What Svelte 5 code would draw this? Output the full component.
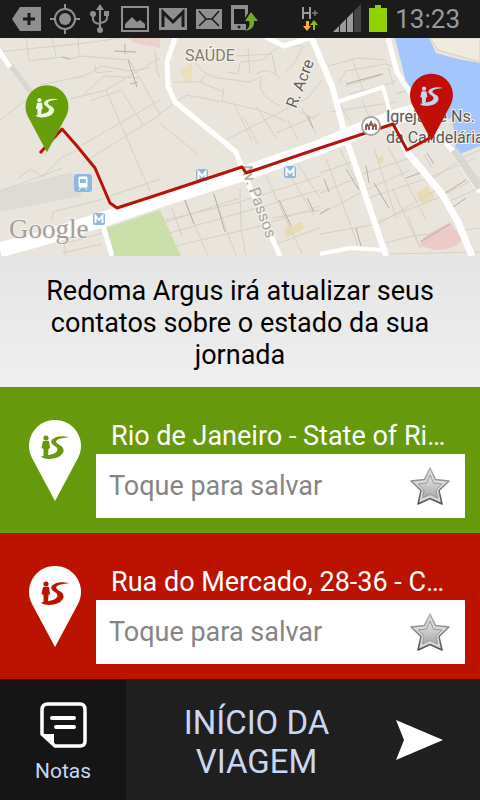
<script lang="ts">
  type Place = { id: string; tone: string; address: string };

  const places: Place[] = [
    { id: 'origin', tone: 'green', address: 'Rio de Janeiro - State of Ri…' },
    { id: 'destination', tone: 'red', address: 'Rua do Mercado, 28-36 - C…' },
  ];

  let names: Record<string, string> = $state({ origin: '', destination: '' });

  const blocks = [
    'M0 14 L26 11 L78 6 L150 -4', 'M26 0 L29 23 L62 19 L70 21 L82 18 L128 22', 'M52 0 L56 18', 'M78 0 L79 17',
    'M40 47 L84 38 L102 28 L130 33 L150 30', 'M95 27 L96 35 L112 33', 'M84 56 L104 38 L140 40', 'M70 61 L106 52 L160 20',
    'M106 52 L126 98 L150 153', 'M90 63 L121 52 L144 88', 'M80 108 L160 62', 'M84 124 L126 98 L160 77', 'M0 82 L26 62',
    'M155 12 L157 33 L160 40', 'M128 20 L160 76', 'M0 153 L42 138 L62 130', 'M42 138 L62 119 L78 112', 'M18 141 L30 131 L42 138',
    'M52 182 L53 174 L110 159', 'M110 158 L160 141', 'M62 215 L102 206', 'M64 206 L102 195', 'M62 190 L66 218',
    'M160 75 L187 57 L234 66 L252 103', 'M173 44 L200 44 L224 54', 'M200 44 L206 36', 'M224 50 L222 63',
    'M195 24 Q204 38 218 40 L250 44 L262 38', 'M226 34 L238 36 L240 24 L262 22 L280 8 L303 8', 'M236 18 L272 16 L276 36',
    'M248 8 L250 36', 'M256 36 Q268 28 280 40', 'M262 40 Q256 52 270 62 L280 68', 'M285 35 Q296 26 303 8',
    'M234 66 L262 73 L285 83', 'M226 102 L308 60 L322 42', 'M243 78 L258 106', 'M256 68 L276 100', 'M276 95 L320 76',
    'M160 85 Q190 110 198 116', 'M288 82 L298 102', 'M302 70 L316 96', 'M301 74 L314 81',
    'M160 186 L240 160', 'M166 182 L240 164 L320 138', 'M170 195 L250 172 L320 152', 'M176 208 L260 188 L320 168',
    'M184 162 L208 218', 'M212 152 L236 218', 'M240 150 L241 190 L246 218', 'M266 138 L302 216', 'M286 130 L314 178', 'M298 126 L320 160',
    'M272 180 L320 172', 'M276 206 L320 190', 'M172 170 L182 198', 'M222 152 L216 148',
    'M324 100 L348 92', 'M320 135 L352 124', 'M320 155 L362 138', 'M320 176 L366 152 L410 132', 'M320 196 L378 186 L440 150',
    'M326 121 L358 207', 'M340 112 L362 154', 'M348 96 L352 118', 'M374 110 L396 180', 'M388 108 L426 182', 'M362 136 L416 118',
    'M368 160 L428 140 L476 120', 'M372 186 L438 160 L480 138', 'M382 206 L412 198 L480 190', 'M392 150 L420 210', 'M434 140 L466 118 L480 112',
    'M420 210 L408 178', 'M442 166 L480 150', 'M384 216 L480 214', 'M424 116 L432 130', 'M434 104 L462 94',
    'M328 28 L358 20 L386 22', 'M346 33 L385 26 L392 28', 'M352 20 L364 55', 'M338 45 L346 33', 'M346 48 L384 36',
    'M350 56 L388 46 L396 42', 'M330 74 L396 64', 'M362 62 L374 90', 'M396 56 L414 50', 'M340 66 L350 84', 'M388 30 L394 48',
  ];

  const lanes = [
    'M114 13 L136 14', 'M125 6 L125 16', 'M128 22 L137 49', 'M130 46 L138 44', 'M62 19 L70 21',
    'M185 162 L194 186', 'M214 156 L225 194', 'M279 162 L291 188', 'M307 160 L314 174', 'M366 128 L369 145', 'M374 145 L389 170',
    'M346 131 L359 152', 'M324 141 L329 154', 'M406 140 L420 135', 'M442 157 L466 142', 'M452 170 L466 160', 'M420 204 L450 186',
    'M346 46 L382 36', 'M308 78 L313 90', 'M427 115 L434 126', 'M320 176 L329 170', 'M356 190 L361 208',
  ];
</script>

{#snippet walker()}
  <circle cx="17" cy="19" r="2.6" />
  <path d="M14 22 H20 L21 29 L19.5 30 L19 37 H14.5 L14.5 30 L12.5 29 Z" />
  <path d="M40 18.2 C33 16.2 25 17.5 22.5 21.5 C20.5 26 29.500 27 28.500 31 C27.500 35.500 18 36 12 37.500 C15 41.500 32 41 34.500 32.500 C36 26.500 27 25.500 27 22.500 C28 19.500 34 19 40 18.200 Z" />
{/snippet}

{#snippet pinShape()}
  <path d="M26 82 L3 39 A26 26 0 1 1 49 39 Z" />
{/snippet}

<div class="screen">
  <header class="status">
    <div class="notices">
      <svg width="30" height="30" viewBox="0 0 30 30" class="g"><path d="M0 15 L8 3 H29 V27 H8 Z" /><path d="M17 9 V21 M11 15 H23" stroke="#1b1b1b" stroke-width="3" /></svg>
      <svg width="30" height="30" viewBox="0 0 30 30" class="g"><circle cx="15" cy="15" r="6" /><circle cx="15" cy="15" r="10" fill="none" stroke="#8f8f8f" stroke-width="2" /><path d="M15 0 V6 M15 24 V30 M0 15 H6 M24 15 H30" stroke="#8f8f8f" stroke-width="2" /></svg>
      <svg width="24" height="30" viewBox="-2 0 24 30" class="g"><path d="M10 5 V26 M3 11 V15 Q3 19 10 20 M17 10 V14 Q17 18 10 19" fill="none" stroke="#8f8f8f" stroke-width="2" /><path d="M10 0 L14 6 H6 Z" /><circle cx="3" cy="10" r="3" /><rect x="14" y="7" width="5" height="5" /><circle cx="10" cy="26" r="3" /></svg>
      <svg width="30" height="30" viewBox="0 0 30 30" class="g"><rect x="2" y="3" width="26" height="24" fill="none" stroke="#8f8f8f" stroke-width="2" /><path d="M5 24 V20 L12 13 L17 18 L20 16 L25 20 V24 Z" /></svg>
      <svg width="30" height="30" viewBox="0 0 30 30" class="g"><rect x="1" y="4" width="28" height="22" /><path d="M5 23 V8 L15 18 L25 8 V23" fill="none" stroke="#1b1b1b" stroke-width="3" /></svg>
      <svg width="26" height="30" viewBox="0 0 26 30" class="g"><rect y="5" width="26" height="20" /><path d="M3 7 L10 15 L16 15 L23 7 M3 22 L10 15 M23 22 L16 15" fill="none" stroke="#1b1b1b" stroke-width="1.500" /></svg>
      <svg width="28" height="30" viewBox="0 0 28 30" class="g"><path d="M1 1 H18 V9 L15 14 V5 H4 V20 H16 V26 H1 Z" /><circle cx="9" cy="23" r="1.500" fill="#1b1b1b" /><path d="M15 27 Q21 23 19 17 H15 L21 8 L28 17 H24 Q25 26 15 27 Z" fill="#76a82a" /></svg>
    </div>
    <div class="signals">
      <svg width="24" height="30" viewBox="0 0 24 30"><path d="M2 3 V15 M9 3 V15 M2 9 H9" stroke="#9c9c9c" stroke-width="2" /><path d="M11 9 H17 M14 6 V12" stroke="#9c9c9c" stroke-width="1" /><path d="M5 17 H8 V22 H10 L6 27 L2 22 H5 Z" fill="#ffae35" /><path d="M12 26 H14 V21 H17 L13 16 L9 21 H12 Z" fill="#7dc80f" /></svg>
      <svg width="28" height="30" viewBox="0 0 28 30"><path d="M0 28 L6 22 V28 Z M7 28 V21 L13 15 V28 Z M14 28 V14 L20 8 V28 Z" fill="#9a9a9a" /><path d="M21 28 V7 L28 0 V28 Z" fill="#444" /></svg>
      <svg width="18" height="30" viewBox="0 0 18 30"><path d="M0 4 H6 V1 H12 V4 H18 V28 H0 Z" fill="#91d000" /></svg>
      <time>13:23</time>
    </div>
  </header>

  <svg class="map" viewBox="0 0 480 218" preserveAspectRatio="xMidYMid slice" role="img" aria-label="Mapa do trajeto">
    <rect width="480" height="218" fill="#e9e5dc" />
    <path d="M128 0 H160 V10 L134 5 Z" fill="#edd0c9" />
    <path d="M0 152 L72 134 L82 158 L0 174 Z" fill="#dedbd5" />
    <path d="M180 33 L192 25 V44 H187 Z" fill="#eddfb8" />
    <path d="M107 190 L160 172 L181 218 H111 Z" fill="#cadfaa" />
    <path d="M284 190 L302 184 L304 191 L286 200 Z M416 156 L427 148 L435 159 L423 168 Z M377 120 L383 118 L384 124 L378 126 Z" fill="#e9dcb4" />
    <path d="M420 208 Q422 198 432 194 L450 184 L462 202 Q455 212 436 212 Z" fill="#eccac6" />
    <path d="M395 0 H429 L436 15 L458 21 L480 25 V108 L470 112 L460 116 L445 95 L420 60 L406 44 Z" fill="#a5c6fd" />
    <path d="M430 0 L438 12 L480 24 V0 Z" fill="#efebdf" stroke="#d4cec1" />
    <path d="M420 88 L452 80 L456 108 L440 108 Z" fill="#e4e1dc" />
    <g class="blocks">
      {#each blocks as d}<path {d} />{/each}
    </g>
    <g class="lanes">
      {#each lanes as d}<path {d} />{/each}
    </g>

    <path d="M-4 8 L33 57" stroke="#d9d7d1" stroke-width="5" />
    <g class="roads">
      <path d="M-2 11 L10 29" stroke-width="5" />
      <path d="M0 212 L50 198 L107 180 L160 162 L245 135 L320 109 L370 88 L398 78 L436 68" stroke-width="15" />
      <path d="M175 0 L167 24 L168 48 L175 64 L224 104 L236 114 L244 136 L280 218" stroke-width="5" />
      <path d="M258 -5 L284 8 L312 -1" stroke-width="5" />
      <path d="M310 -4 L332 48 L346 100 L386 218" stroke-width="6" />
      <path d="M337 64 L383 49 L392 82" stroke-width="4" />
      <path d="M388 0 L397 34 L416 64 L456 118 L480 154" stroke-width="5" />
      <path d="M393 86 L408 115 L442 156 L458 184 L472 218" stroke-width="7" />
      <path d="M102 184 L112 218" stroke-width="5" />
      <path d="M320 216 L350 210 L384 212" stroke-width="4" />
    </g>
    <path d="M454 112 L480 150" stroke="#d9d7d1" stroke-width="8" />

    <g class="labels">
      <text x="185" y="23" fill="#82796a">SAÚDE</text>
      <text transform="translate(296 71) rotate(-69)" fill="#66625c">R. Acre</text>
      <text transform="translate(240 128) rotate(70)" fill="#aaa69f">Av. Passos</text>
      <text x="386" y="84" fill="#5a5a5a">Igreja de Ns.</text>
      <text x="386" y="105" fill="#5a5a5a">da Candelária</text>
      <text class="google" x="9" y="200">Google</text>
    </g>

    <g fill="#8db8e2">
      <rect x="74" y="136" width="18" height="18" rx="3" />
      <rect x="93" y="175" width="12" height="12" rx="2" />
      <rect x="196" y="131" width="12" height="12" rx="2" />
      <rect x="284" y="128" width="12" height="12" rx="2" />
    </g>
    <path d="M95.500 185 V178 L99 182 L102.500 178 V185 M198.500 141 V134 L202 138 L205.500 134 V141 M286.500 138 V131 L290 135 L293.500 131 V138" fill="none" stroke="#fff" stroke-width="2" />
    <path d="M79 139 H87 V149 H79 Z M79 152 L81 149 M87 152 L85 149" fill="#fff" stroke="#fff" />
    <path d="M80 141 H86 V145 H80 Z" fill="#8db8e2" />

    <path class="route" d="M40 115 L62 91 L77 108 L95 130 L110 165 L117 170 L160 156 L242 129 L246 135 L320 110 L393 86 L407 112 L430 100" />

    <circle cx="371" cy="88" r="9" fill="#fff" stroke="#a9a5a0" stroke-width="2" />
    <path d="M365 92 V87 L367 85 L369 87 V86 L371 82 L373 86 V87 L375 85 L377 87 V92 H375 V89 H374 V92 H372 V88 H370 V92 H368 V89 H367 V92 Z" fill="#8e6357" />

    <g transform="translate(25.500 46.500) scale(.825)"><g fill="#689d0b">{@render pinShape()}</g><g fill="#eef7df">{@render walker()}</g></g>
    <g transform="translate(410 35) scale(.825)"><g fill="#c01005">{@render pinShape()}</g><g fill="#c3d3f0">{@render walker()}</g></g>
  </svg>

  <p class="message">Redoma Argus irá atualizar seus contatos sobre o estado da sua jornada</p>

  {#each places as place (place.id)}
    <section class="place {place.tone}">
      <svg class="pin" width="52" height="82" viewBox="0 0 52 82" aria-hidden="true">
        <g fill="#fff">{@render pinShape()}</g>
        <g fill="currentColor">{@render walker()}</g>
      </svg>
      <div class="details">
        <label for={place.id}>{place.address}</label>
        <div class="field">
          <input id={place.id} type="text" placeholder="Toque para salvar" bind:value={names[place.id]} />
          <button class="star" aria-label="Favorito">
            <svg width="40" height="40" viewBox="0 0 40 40">
              <defs>
                <linearGradient id="metal-{place.id}" x2="0" y2="1"><stop stop-color="#e6e6e6" /><stop offset="1" stop-color="#a8a8a8" /></linearGradient>
                <linearGradient id="edge-{place.id}" x2="0" y2="1"><stop stop-color="#b5b5b5" /><stop offset="1" stop-color="#505050" /></linearGradient>
              </defs>
              <path d="M20 2 L25.500 13.500 L39 15 L29 24.500 L32 38 L20 32.500 L8 38 L11 24.500 L1 15 L14.500 13.500 Z" fill="#d9d9d9" stroke="url(#edge-{place.id})" stroke-width="1.500" stroke-linejoin="round" />
              <path d="M20 9 L23.500 17 L32 18 L26 24 L27.500 32 L20 28.500 L12.500 32 L14 24 L8 18 L16.500 17 Z" fill="url(#metal-{place.id})" stroke="#999" />
            </svg>
          </button>
        </div>
      </div>
    </section>
  {/each}

  <footer>
    <button class="notes">
      <svg width="48" height="48" viewBox="0 0 48 48" aria-hidden="true">
        <path d="M9 3 H41 Q46 3 46 9 V40 Q46 45 41 45 H16 L3 33 V9 Q3 3 9 3 Z" fill="none" stroke="#fff" stroke-width="3.500" />
        <path d="M3 33 H15 V45 Z" fill="#fff" />
        <path d="M13 17 H35 M17 26 H35" stroke="#fff" stroke-width="4" stroke-linecap="round" />
      </svg>
      <span>Notas</span>
    </button>
    <button class="start">
      <span>INÍCIO DA VIAGEM</span>
      <svg width="48" height="40" viewBox="0 0 48 40" aria-hidden="true"><path d="M1 0 L48 20 L1 40 L9 20 Z" fill="#fff" /></svg>
    </button>
  </footer>
</div>

<style>
  :global(body) { margin: 0; background: #1f1f1f; }
  .screen {
    min-height: 100vh;
    display: flex; flex-direction: column;
    font-family: Roboto, "Noto Sans", sans-serif;
  }
  svg { display: block; flex: none; }
  button { border: 0; padding: 0; background: none; font: inherit; color: inherit; cursor: pointer; }

  .status {
    height: 38px; padding: 0 20px 0 12px;
    display: flex; align-items: center; justify-content: space-between;
    background: #1b1b1b; color: #9a9a9a;
  }
  .notices { display: flex; align-items: center; gap: 8px; }
  .signals { display: flex; align-items: center; gap: 8px; }
  .g { fill: #8f8f8f; }
  time { font-size: 26px; line-height: 36px; }

  .map { width: 100%; height: auto; }
  .blocks { fill: none; stroke: #d6d1c7; stroke-width: 1; }
  .lanes { fill: none; stroke: #b3afa6; stroke-width: 1; }
  .roads { fill: none; stroke: #fff; stroke-linejoin: round; }
  .labels { font-size: 16px; stroke: #f5f2ec; stroke-width: 2; paint-order: stroke; }
  .google { font-family: "Liberation Serif", serif; font-size: 27px; fill: #a3a09b; }
  .route { fill: none; stroke: #b51409; stroke-width: 3; stroke-linejoin: round; }

  .message {
    margin: 0; padding: 19px 32px 16px;
    background: linear-gradient(#e5e5e5, #efefef);
    color: #000;
    font-size: 27px; line-height: 32px; text-align: center;
  }

  .place {
    display: flex; align-items: center;
    padding: 32px 15px 15px 29px; gap: 15px;
  }
  .green { background: #67990c; color: #67990c; }
  .red { background: #bb1300; color: #bb1300; }
  .pin { align-self: flex-start; }
  .details { flex: 1; min-width: 0; }
  label {
    display: block; padding: 0 12px 0 15px;
    color: #fff; font-size: 27px; line-height: 35px;
    white-space: nowrap; overflow: hidden; text-overflow: ellipsis;
  }
  .field {
    display: flex; align-items: center;
    height: 64px; padding: 0 15px 0 13px;
    background: #fff;
  }
  input {
    flex: 1; min-width: 0; padding: 0; border: 0; outline: 0;
    background: none; color: #222; font: inherit; font-size: 27px;
  }
  input::placeholder { color: #858585; opacity: 1; }

  footer { flex: 1; display: flex; min-height: 121px; color: #c8d7f2; }
  .notes {
    width: 126px; padding-top: 4px;
    display: flex; flex-direction: column; align-items: center; justify-content: center; gap: 10px;
    background: #151515;
    font-size: 21px; line-height: 24px;
  }
  .start {
    flex: 1; padding: 0 37px 0 8px;
    display: flex; align-items: center;
    background: #1f1f1f;
    font-size: 33px; line-height: 39px;
  }
  .start span { flex: 1; padding: 4px 48px 0 32px; }
</style>
